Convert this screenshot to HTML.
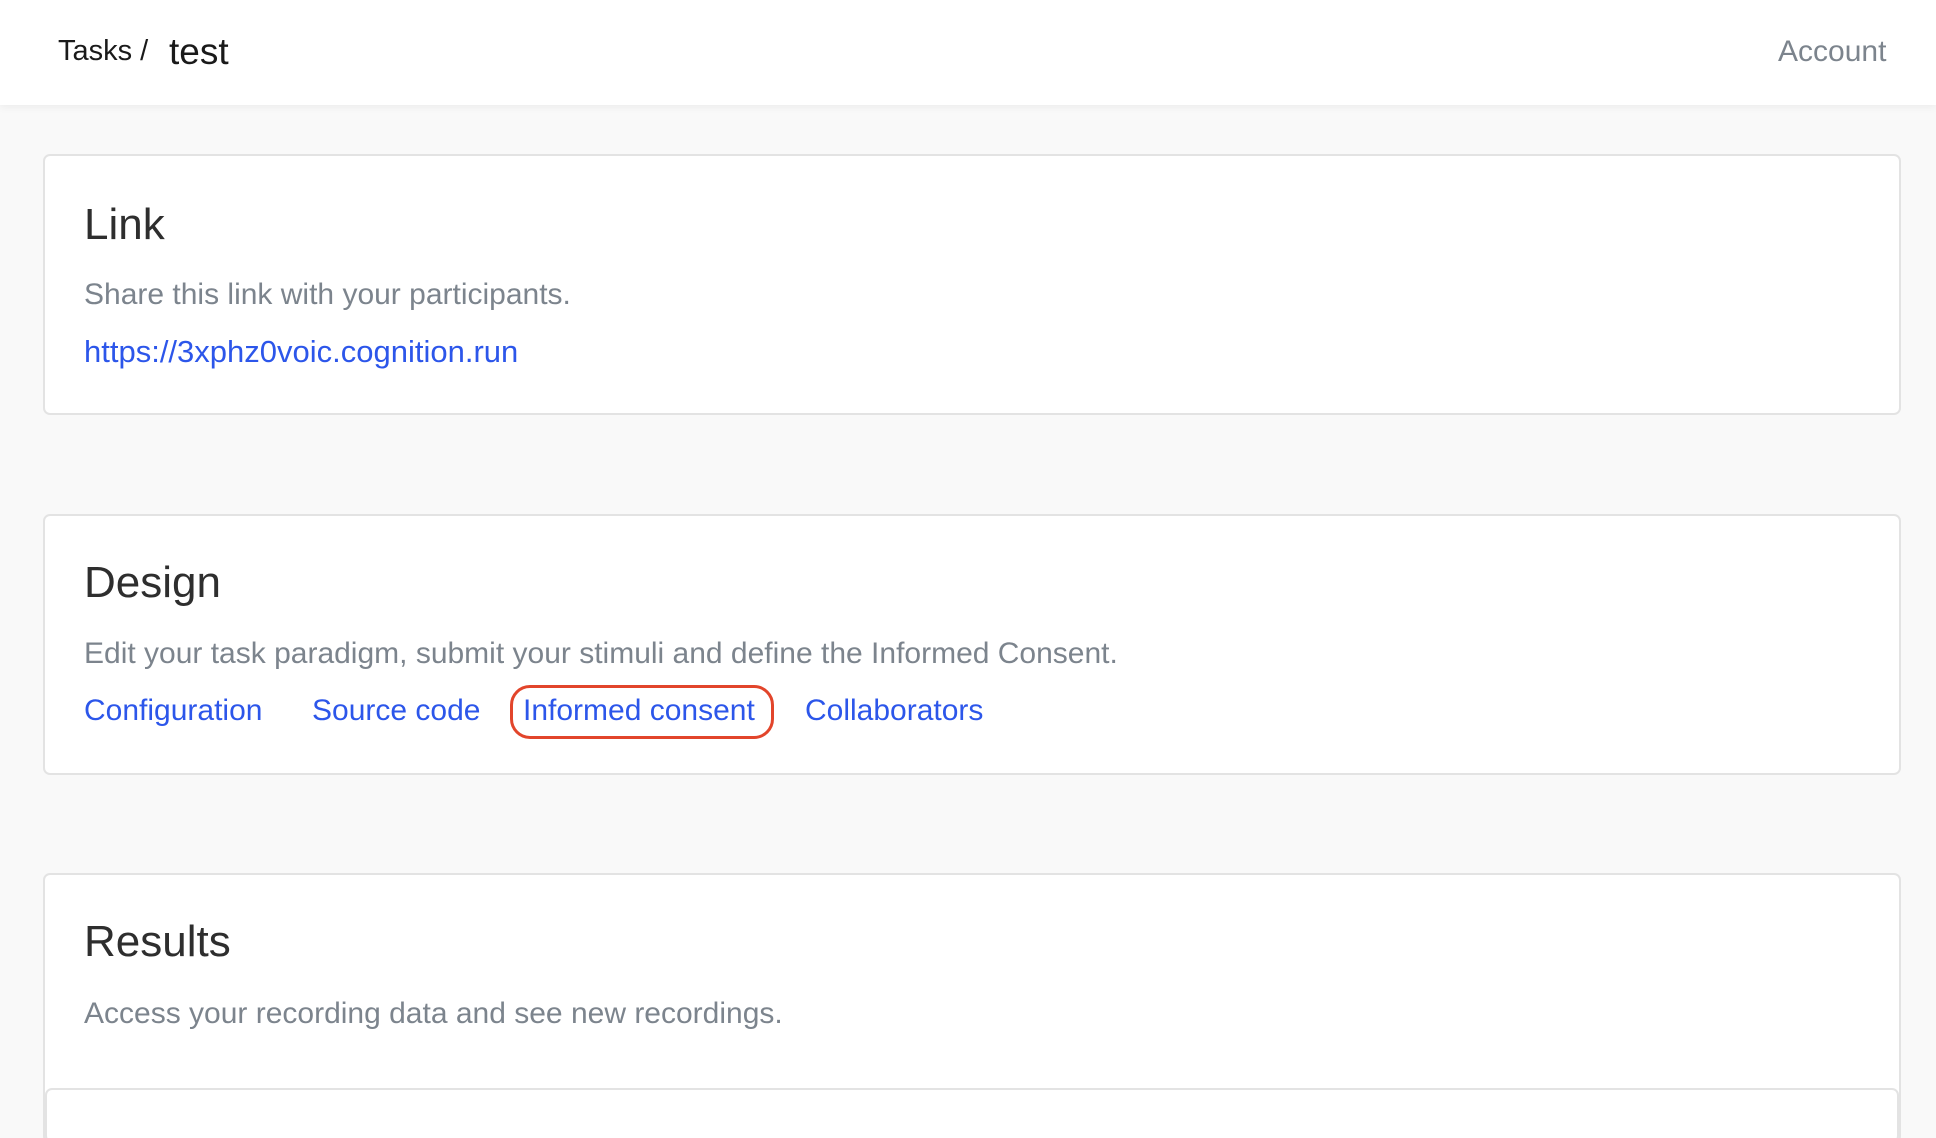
<!DOCTYPE html>
<html style="overflow:hidden;width:1936px;height:1138px"><head><meta charset="utf-8"><style>
*{margin:0;padding:0;box-sizing:border-box}
body{width:1936px;height:1138px;overflow:hidden;background:#f9f9f9;font-family:"Liberation Sans",sans-serif;position:relative}
.hdr{position:absolute;left:0;top:0;width:1936px;height:105px;background:#fff;box-shadow:0 2px 8px rgba(0,0,0,0.06)}
.t{position:absolute;white-space:nowrap;line-height:1}
.card{position:absolute;background:#fff;border:2px solid #e3e3e3;border-radius:7px}
.h{font-size:44px;color:#2e2e2e}
.g{font-size:30px;color:#7c848d}
.a{font-size:30px;color:#2c56ea}
</style></head><body>
<div class="hdr"></div>
<div class="t" style="left:58px;top:37px;font-size:29px;color:#1a1a1a">Tasks&nbsp;/</div>
<div class="t" style="left:169px;top:33px;font-size:37px;color:#1a1a1a">test</div>
<div class="t" style="left:1778px;top:37px;font-size:30px;color:#7c848d">Account</div>

<div class="card" style="left:43px;top:154px;width:1858px;height:261px"></div>
<div class="t h" style="left:84px;top:203px">Link</div>
<div class="t g" style="left:84px;top:280px">Share this link with your participants.</div>
<div class="t a" style="left:84px;top:336px;font-size:31px">https://3xphz0voic.cognition.run</div>

<div class="card" style="left:43px;top:514px;width:1858px;height:261px"></div>
<div class="t h" style="left:84px;top:561px">Design</div>
<div class="t g" style="left:84px;top:639px">Edit your task paradigm, submit your stimuli and define the Informed Consent.</div>
<div class="t a" style="left:84px;top:696px">Configuration</div>
<div class="t a" style="left:312px;top:696px">Source code</div>
<div class="t a" style="left:523px;top:696px">Informed consent</div>
<div style="position:absolute;left:510px;top:685px;width:264px;height:54px;border:3px solid #e2452b;border-radius:20px"></div>
<div class="t a" style="left:805px;top:696px">Collaborators</div>

<div class="card" style="left:43px;top:873px;width:1858px;height:270px"></div>
<div class="t h" style="left:84px;top:920px">Results</div>
<div class="t g" style="left:84px;top:999px">Access your recording data and see new recordings.</div>
<div class="card" style="left:45px;top:1088px;width:1854px;height:55px"></div>
</body></html>
